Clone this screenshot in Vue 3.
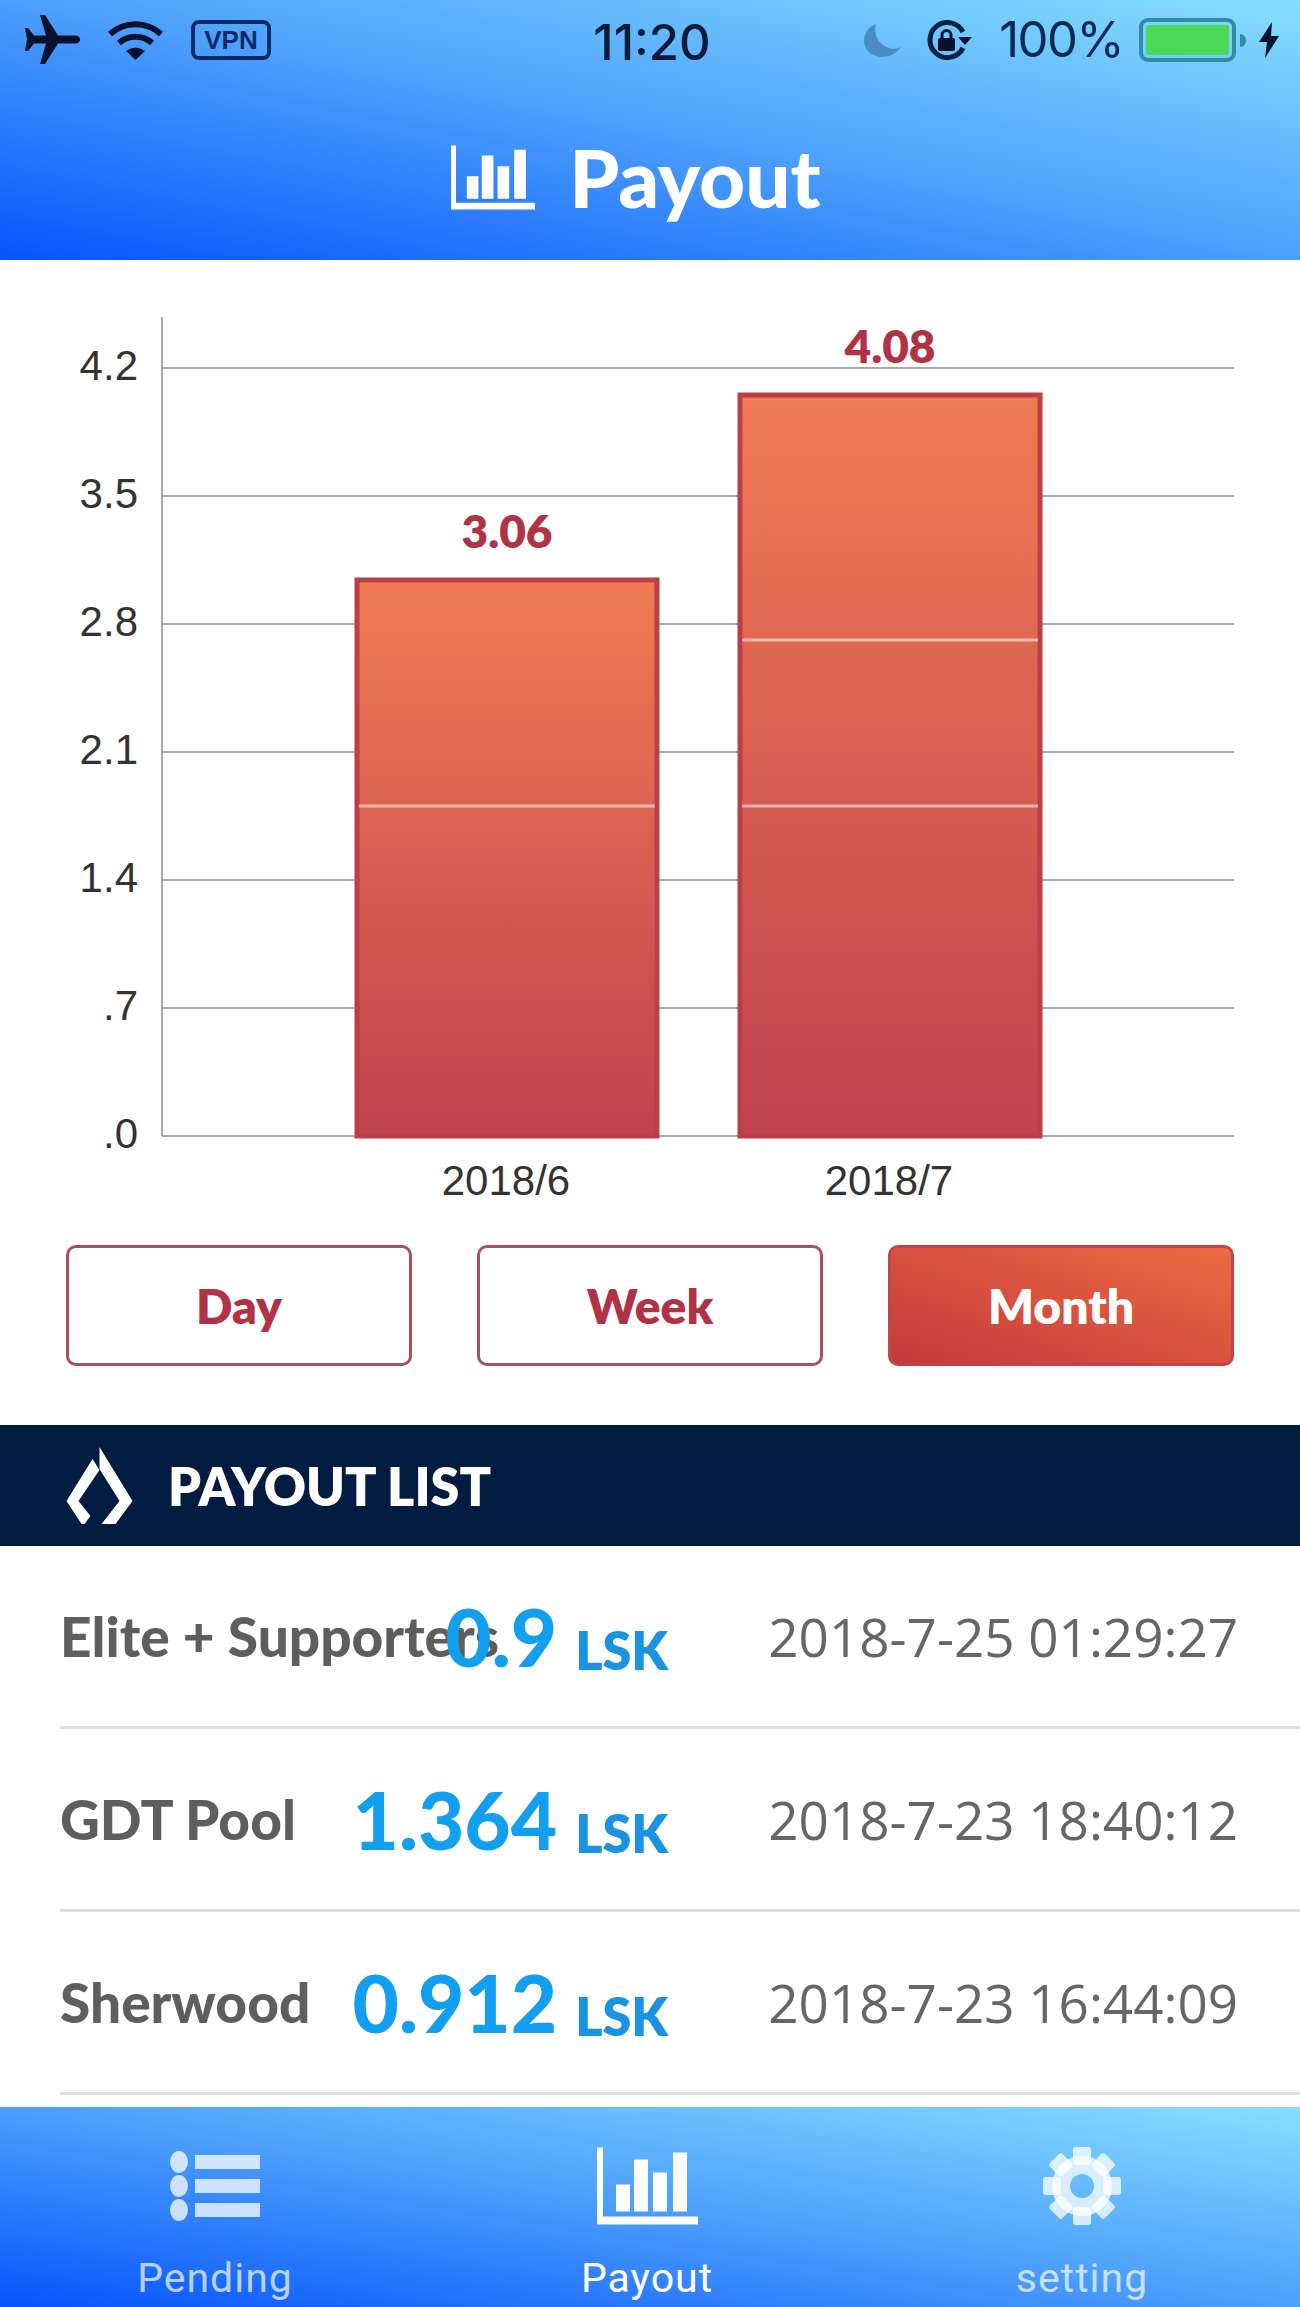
<template>
  <div class="page">
    <header class="top">
      <div class="status">
        <div class="status-left">
          <svg width="55" height="49" viewBox="0 0 55 49"><path class="ink" d="M55 24.500c0-2.500-2-4-5-4H33L20 0h-5l6 20.500H9L3 13H0l2 11.500L0 36h3l6-7.500h12L15 49h5l13-20.500h17c3 0 5-1.500 5-4z" /></svg>
          <svg width="57" height="40" viewBox="0 0 57 40">
            <path class="wifi" d="M3 14A38 38 0 0 1 54 14" />
            <path class="wifi" d="M12 23A25 25 0 0 1 45 23" />
            <path class="ink" d="M19 31Q28.500 24 38 31L28.500 40z" />
          </svg>
          <span class="vpn">VPN</span>
        </div>
        <div class="clock">11:20</div>
        <div class="status-right">
          <svg width="37" height="33" viewBox="0 0 37 33"><path fill="#4a8cc6" d="M12 0C4 3 0 10 0 17c0 9 8 16 18 16 8 0 15-4 19-10-4 2-8 2-12 1C15 21 9 11 12 0z" /></svg>
          <svg class="rotate-lock" width="45" height="40" viewBox="0 0 45 40">
            <path class="lock-ring" d="M36 28A17.500 17.500 0 1 1 36 12" />
            <path class="ink" d="M31 17h14l-7 8z" />
            <rect class="ink" x="11" y="18" width="17" height="13" rx="2" />
            <path class="lock-shackle" d="M15 18v-3a4.500 4.500 0 0 1 9 0v3" />
          </svg>
          <span class="percent">100%</span>
          <div class="battery"><div class="battery-fill"></div></div>
          <div class="battery-tip"></div>
          <svg class="bolt" width="20" height="36" viewBox="0 0 20 36"><path class="ink" d="M13 0L0 20h8L6 36l14-22h-8z" /></svg>
        </div>
      </div>
      <div class="title">
        <svg width="84" height="65" viewBox="0 0 101 77"><path fill="#fff" :d="barsIcon" /></svg>
        <h1>Payout</h1>
      </div>
    </header>

    <section class="chart">
      <svg width="1300" height="960" viewBox="0 260 1300 960">
        <defs>
          <linearGradient id="barFill" x1="0" y1="0" x2="0" y2="1">
            <stop offset="0" stop-color="#ef7c54" />
            <stop offset="1" stop-color="#c0424f" />
          </linearGradient>
        </defs>
        <g v-for="t in ticks" :key="t.label">
          <line class="grid" x1="162" :x2="1234" :y1="t.y" :y2="t.y" />
          <text class="axis-label" x="138" :y="t.y + 12" text-anchor="end">{{ t.label }}</text>
        </g>
        <line class="grid" x1="162" x2="162" y1="317" y2="1136" />
        <g v-for="b in bars" :key="b.name">
          <rect class="bar" :x="b.x + 2" :y="b.top + 2" width="300" :height="1134 - b.top" fill="url(#barFill)" />
          <line v-for="s in b.splits" :key="s" class="split" :x1="b.x + 4" :x2="b.x + 300" :y1="s" :y2="s" />
          <text class="bar-value" :x="b.x + 152" :y="b.top - 30" text-anchor="middle">{{ b.value }}</text>
          <text class="axis-label" :x="b.x + 151" y="1195" text-anchor="middle">{{ b.name }}</text>
        </g>
      </svg>
    </section>

    <div class="ranges">
      <button v-for="r in ranges" :key="r" class="range" :class="{ 'range--on': r === 'Month' }">{{ r }}</button>
    </div>

    <div class="list-head">
      <svg width="67" height="77" viewBox="0 0 66 77">
        <path fill="#fff" d="M33 0L66 54 49 77H35L53 54 33 22z" />
        <path fill="#fff" d="M26 12l7 11-21 31 12 15-6 8h-3L0 54z" />
      </svg>
      <span>PAYOUT LIST</span>
    </div>

    <ul class="rows">
      <li v-for="p in payouts" :key="p.date" class="row">
        <span class="row-name">{{ p.pool }}</span>
        <span class="row-amount">{{ p.amount }}<small>LSK</small></span>
        <span class="row-date">{{ p.date }}</span>
      </li>
    </ul>

    <nav class="tabs">
      <div class="tab">
        <svg class="tab-icon" width="90" height="78" viewBox="0 0 90 78">
          <g v-for="y in [15, 39, 63]" :key="y">
            <ellipse cx="9" :cy="y" rx="9" ry="11" />
            <rect x="25" :y="y - 7" width="65" height="14" />
          </g>
        </svg>
        <span>Pending</span>
      </div>
      <div class="tab tab--on">
        <svg width="101" height="78" viewBox="0 0 101 77"><path fill="#fff" :d="barsIcon" /></svg>
        <span>Payout</span>
      </div>
      <div class="tab">
        <svg class="tab-icon" width="78" height="78" viewBox="0 0 78 78">
          <rect v-for="a in [0, 45, 90, 135, 180, 225, 270, 315]" :key="a" x="30" y="0" width="18" height="18" rx="3" :transform="`rotate(${a} 39 39)`" />
          <circle class="gear-ring" cx="39" cy="39" r="21" />
        </svg>
        <span>setting</span>
      </div>
    </nav>
  </div>
</template>

<script setup>
const barsIcon = 'M0 0h6v69h95v8H0zM19 37h14v27H19zM37 12h14v52H37zM56 25h14v39H56zM76 5h14v59H76z'

const ticks = [
  { label: '4.2', y: 368 },
  { label: '3.5', y: 496 },
  { label: '2.8', y: 624 },
  { label: '2.1', y: 752 },
  { label: '1.4', y: 880 },
  { label: '.7', y: 1008 },
  { label: '.0', y: 1136 },
]

const bars = [
  { name: '2018/6', value: '3.06', x: 355, top: 578, splits: [806] },
  { name: '2018/7', value: '4.08', x: 738, top: 393, splits: [640, 806] },
]

const ranges = ['Day', 'Week', 'Month']

const payouts = [
  { pool: 'Elite + Supporters', amount: '0.9', date: '2018-7-25 01:29:27' },
  { pool: 'GDT Pool', amount: '1.364', date: '2018-7-23 18:40:12' },
  { pool: 'Sherwood', amount: '0.912', date: '2018-7-23 16:44:09' },
]
</script>

<style>
html,
body {
  margin: 0;
  background: #fff;
}
</style>

<style scoped>
.page {
  width: 1300px;
  height: 2307px;
  display: flex;
  flex-direction: column;
  overflow: hidden;
  background: #fff;
  font-family: Lato, "Liberation Sans", sans-serif;
}

.top {
  height: 260px;
  flex-shrink: 0;
  box-sizing: border-box;
  background: linear-gradient(to top right, #0654fb 0%, #4fa2fb 52%, #86dffe 100%);
}

.status {
  height: 80px;
  box-sizing: border-box;
  padding: 15px 21px 0 25px;
  display: grid;
  grid-template-columns: 1fr auto 1fr;
  align-items: start;
}

.status-left {
  display: flex;
  align-items: flex-start;
  gap: 27px;
}

.status-left svg:nth-child(2) {
  margin-top: 5px;
}

.vpn {
  box-sizing: border-box;
  width: 80px;
  height: 40px;
  margin-top: 5px;
  border: 4px solid #0c2a68;
  border-radius: 8px;
  color: #0c2a68;
  font: 700 26px/32px "Liberation Sans", sans-serif;
  text-align: center;
}

.clock {
  color: #071a38;
  font: 500 49px/50px Inter, sans-serif;
  margin-top: 3px;
}

.status-right {
  display: flex;
  justify-content: flex-end;
  align-items: center;
  height: 50px;
  color: #0d2a52;
}

.rotate-lock {
  margin: 0 27px 0 26px;
}

.percent {
  font: 400 49px/50px Inter, sans-serif;
  letter-spacing: -1.500px;
  color: #0d2a50;
  margin-right: 16px;
}

.battery {
  box-sizing: border-box;
  width: 97px;
  height: 44px;
  border: 4px solid #2f8ea6;
  border-radius: 9px;
  padding: 3px;
}

.battery-fill {
  height: 100%;
  background: #4cd95a;
  border-radius: 3px;
}

.battery-tip {
  width: 6px;
  height: 13px;
  margin: 0 13px 0 4px;
  background: #2f8ea6;
  border-radius: 0 6px 6px 0;
}

.ink {
  fill: #06122e;
}

.wifi {
  fill: none;
  stroke: #06122e;
  stroke-width: 6;
}

.lock-ring {
  fill: none;
  stroke: #06223f;
  stroke-width: 5;
}

.lock-shackle {
  fill: none;
  stroke: #06122e;
  stroke-width: 3;
}

.title {
  display: flex;
  align-items: center;
  justify-content: center;
  gap: 34px;
  padding-top: 62px;
  padding-right: 28px;
}

.title h1 {
  margin: 0;
  color: #fff;
  font-size: 80px;
  line-height: 70px;
  font-weight: 900;
}

.chart {
  height: 960px;
  flex-shrink: 0;
}

.chart svg {
  display: block;
}

.grid {
  stroke: #a6a9ab;
  stroke-width: 2;
}

.axis-label {
  fill: #333;
  font: 400 42px "Liberation Sans", sans-serif;
}

.bar {
  stroke: #bb3f47;
  stroke-width: 5;
}

.split {
  stroke: rgba(255, 255, 255, 0.55);
  stroke-width: 3;
}

.bar-value {
  fill: #b03245;
  font: 800 46px Lato, sans-serif;
}

.ranges {
  display: grid;
  grid-template-columns: 346px 346px 346px;
  justify-content: space-between;
  padding: 25px 66px 0;
  height: 146px;
  flex-shrink: 0;
  box-sizing: content-box;
}

.range {
  height: 121px;
  box-sizing: border-box;
  border: 3px solid #a8505c;
  border-radius: 10px;
  background: #fff;
  color: #b03245;
  font: 800 48px Lato, sans-serif;
}

.range--on {
  color: #fff;
  border-color: #c0444a;
  background: linear-gradient(to top right, #c4383c, #ee6b42);
}

.list-head {
  height: 121px;
  margin-top: 34px;
  flex-shrink: 0;
  display: flex;
  align-items: center;
  gap: 35px;
  padding-left: 66px;
  background: #011c40;
  color: #fff;
  font-size: 52px;
  font-weight: 800;
}

.rows {
  flex: 1;
  margin: 0;
  padding: 0;
  list-style: none;
  overflow: hidden;
}

.row {
  height: 183px;
  box-sizing: border-box;
  margin-left: 60px;
  padding-right: 62px;
  border-bottom: 3px solid #dedede;
  display: grid;
  grid-template-columns: 200px 408px 1fr;
  align-items: center;
}

.row-name {
  white-space: nowrap;
  color: #5e5e5e;
  font-size: 55px;
  font-weight: 900;
}

.row-amount {
  text-align: right;
  white-space: nowrap;
  color: #129ff0;
  font-size: 80px;
  font-weight: 900;
  position: relative;
}

.row-amount small {
  margin-left: 18px;
  font-size: 52px;
  font-weight: 800;
  color: #1a94e2;
  vertical-align: -3px;
}

.row-date {
  text-align: right;
  white-space: nowrap;
  color: #666;
  font: 400 53px "Open Sans", sans-serif;
}

.tabs {
  height: 200px;
  flex-shrink: 0;
  box-sizing: border-box;
  padding-top: 40px;
  display: grid;
  grid-template-columns: 430px 434px 436px;
  background: linear-gradient(to top right, #0654fb 0%, #4fa2fb 52%, #86dffe 100%);
}

.tab {
  display: flex;
  flex-direction: column;
  align-items: center;
  gap: 30px;
  color: rgba(255, 255, 255, 0.7);
  font: 400 41px/46px Roboto, sans-serif;
  letter-spacing: 1px;
}

.tab--on {
  color: #fff;
}

.tab-icon {
  fill: rgba(255, 255, 255, 0.75);
}

.gear-ring {
  fill: none;
  stroke: rgba(255, 255, 255, 0.75);
  stroke-width: 18;
}
</style>
